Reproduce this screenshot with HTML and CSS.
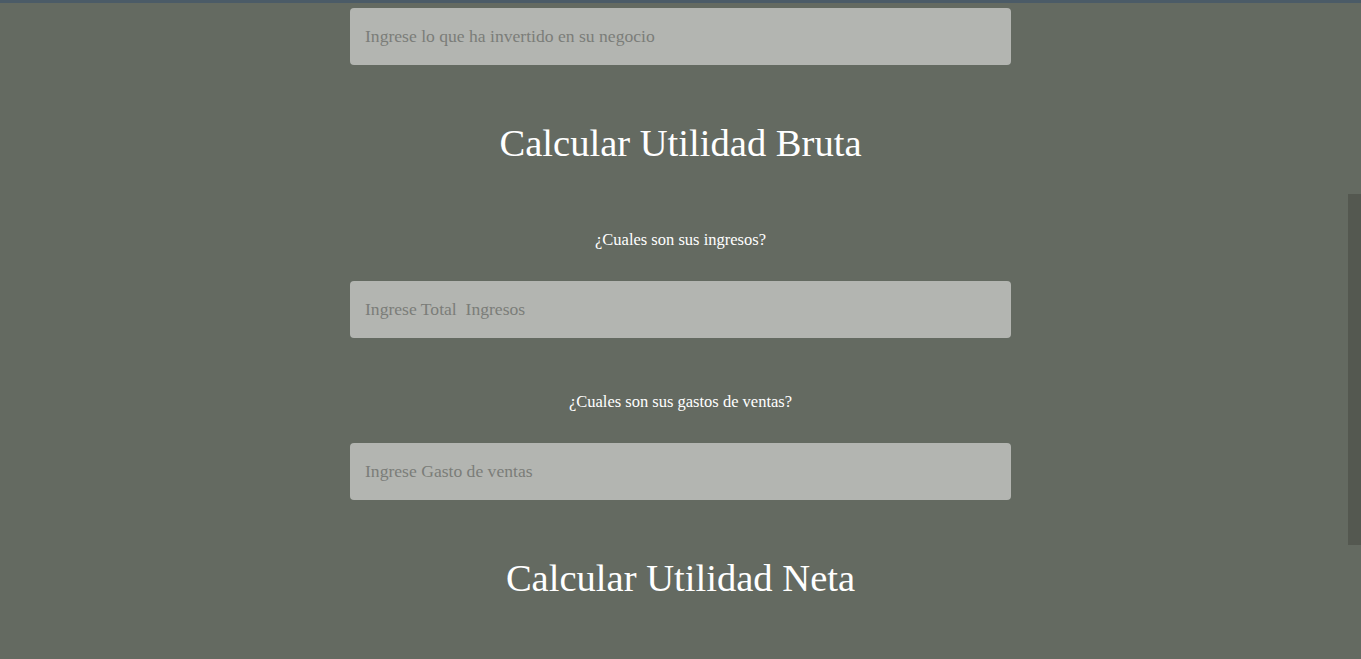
FILE: index.html
```html
<!DOCTYPE html>
<html lang="es">
<head>
<meta charset="utf-8">
<title>Calculadora</title>
<link rel="stylesheet" href="styles.css">
</head>
<body>
<div class="topbar"></div>
<main class="page">
  <input class="field" type="text" placeholder="Ingrese lo que ha invertido en su negocio">
  <h2 class="title title-first">Calcular Utilidad Bruta</h2>
  <p class="label">¿Cuales son sus ingresos?</p>
  <input class="field" type="text" placeholder="Ingrese Total&nbsp; Ingresos">
  <p class="label label-gap">¿Cuales son sus gastos de ventas?</p>
  <input class="field" type="text" placeholder="Ingrese Gasto de ventas">
  <h2 class="title">Calcular Utilidad Neta</h2>
</main>
<div class="scroll-thumb"></div>
</body>
</html>
```
FILE: styles.css
```css
html, body {
  margin: 0;
  padding: 0;
  height: 100%;
  overflow: hidden;
}
body {
  background: #646a61;
  font-family: "Liberation Serif", "Times New Roman", serif;
  color: #ffffff;
}
.topbar {
  height: 3px;
  background: #4b5b67;
}
.page {
  width: 661px;
  margin: 0 auto;
  padding-top: 5px;
  display: flex;
  flex-direction: column;
  align-items: stretch;
}
.field {
  box-sizing: border-box;
  height: 57px;
  width: 100%;
  border: none;
  border-radius: 4px;
  background: #b3b5b1;
  padding: 0 15px;
  font-family: "Liberation Serif", "Times New Roman", serif;
  font-size: 17.6px;
  color: #555;
  outline: none;
}
.field::placeholder {
  color: #7b7d79;
}
.title {
  margin: 55px 0 0;
  font-weight: normal;
  font-size: 38.6px;
  line-height: 46px;
  text-align: center;
}
.label {
  margin: 65px 0 32px;
  font-size: 16.5px;
  line-height: 18px;
  text-align: center;
}
.label-gap {
  margin-top: 55px;
}
.scroll-thumb {
  position: fixed;
  right: 0;
  top: 194px;
  width: 13px;
  height: 351px;
  background: #545850;
}
```
